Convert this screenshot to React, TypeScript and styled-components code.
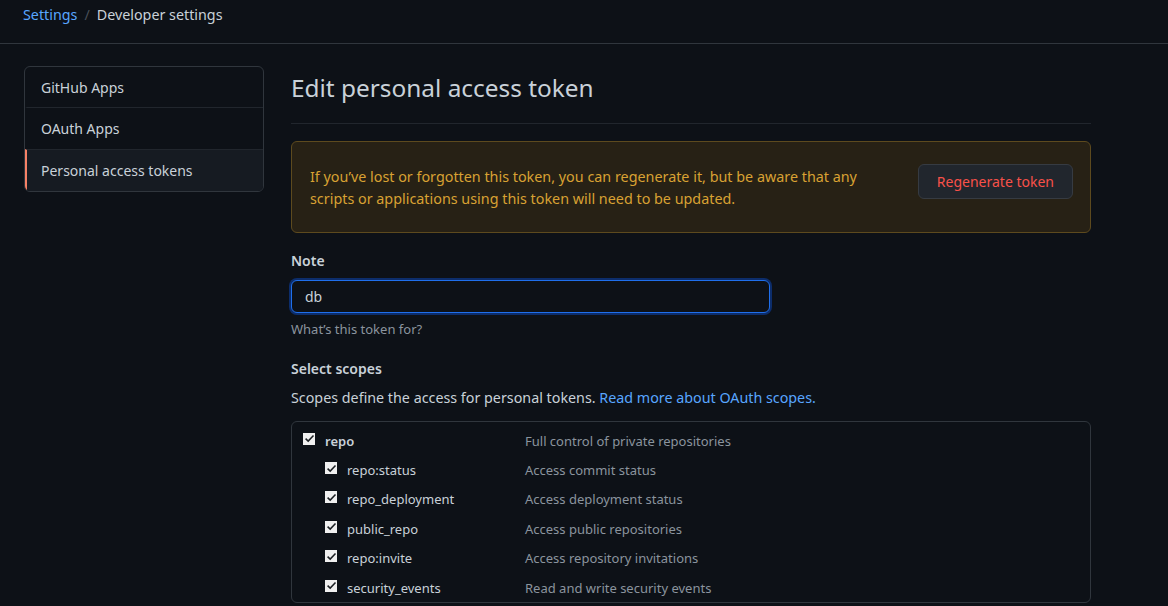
import React from 'react';
import styled, { createGlobalStyle } from 'styled-components';

interface IScope {
  name: string;
  description: string;
  child?: boolean;
}

const scopes: IScope[] = [
  { name: 'repo', description: 'Full control of private repositories' },
  { name: 'repo:status', description: 'Access commit status', child: true },
  { name: 'repo_deployment', description: 'Access deployment status', child: true },
  { name: 'public_repo', description: 'Access public repositories', child: true },
  { name: 'repo:invite', description: 'Access repository invitations', child: true },
  { name: 'security_events', description: 'Read and write security events', child: true },
];

const menuItems = ['GitHub Apps', 'OAuth Apps', 'Personal access tokens'];

const App: React.FC = () => {
  return (
    <>
      <GlobalStyle />
      <Page>
        <Breadcrumb>
          <CrumbLink>Settings</CrumbLink>
          <CrumbSep>/</CrumbSep>
          <CrumbCurrent>Developer settings</CrumbCurrent>
        </Breadcrumb>

        <Layout>
          <Sidebar>
            {menuItems.map((item, i) => (
              <MenuItem key={item} selected={i === menuItems.length - 1}>
                {item}
              </MenuItem>
            ))}
          </Sidebar>

          <Main>
            <Title>Edit personal access token</Title>

            <Flash>
              <FlashText>
                If you’ve lost or forgotten this token, you can regenerate it, but be aware that any
                scripts or applications using this token will need to be updated.
              </FlashText>
              <DangerButton>Regenerate token</DangerButton>
            </Flash>

            <Label>Note</Label>
            <Input defaultValue="db" />
            <Hint>What’s this token for?</Hint>

            <Label>Select scopes</Label>
            <Description>
              Scopes define the access for personal tokens.{' '}
              <Link>Read more about OAuth scopes.</Link>
            </Description>

            <ScopeBox>
              {scopes.map((scope) => (
                <ScopeRow key={scope.name}>
                  <ScopeName child={scope.child}>
                    <CheckBox>
                      <svg width="11" height="11" viewBox="0 0 11 11">
                        <path d="M1.6 5.6 L4.2 8.1 L9.5 2.5" fill="none" stroke="#1b1f23" strokeWidth="1.5" />
                      </svg>
                    </CheckBox>
                    <ScopeLabel child={scope.child}>{scope.name}</ScopeLabel>
                  </ScopeName>
                  <ScopeDesc>{scope.description}</ScopeDesc>
                </ScopeRow>
              ))}
            </ScopeBox>
          </Main>
        </Layout>
      </Page>
    </>
  );
};

const GlobalStyle = createGlobalStyle`
  html, body {
    margin: 0;
    background: #0d1117;
  }
  body {
    font-family: 'Noto Sans', sans-serif;
    color: #c9d1d9;
  }
`;

const Page = styled.div`
  width: 1168px;
  height: 606px;
  overflow: hidden;
  background: #0d1117;
`;

const Breadcrumb = styled.div`
  display: flex;
  align-items: center;
  height: 29px;
  padding: 0 23px 14px;
  border-bottom: 1px solid #30363d;
  font-size: 14.3px;
`;

const CrumbLink = styled.span`
  color: #58a6ff;
`;

const CrumbSep = styled.span`
  color: #484f58;
  margin: 0 7px;
`;

const CrumbCurrent = styled.span`
  color: #c9d1d9;
`;

const Layout = styled.div`
  display: flex;
  gap: 27px;
  padding: 22px 24px 0;
`;

const Sidebar = styled.nav`
  box-sizing: border-box;
  width: 240px;
  flex-shrink: 0;
  align-self: flex-start;
  border: 1px solid #30363d;
  border-radius: 6px;
  overflow: hidden;
`;

const MenuItem = styled.div<{ selected?: boolean }>`
  height: 41px;
  display: flex;
  align-items: center;
  padding-left: 14px;
  font-size: 14px;
  color: #c9d1d9;
  border-top: 1px solid #21262d;
  border-left: 2px solid ${({ selected }) => (selected ? '#f78166' : 'transparent')};
  background: ${({ selected }) => (selected ? '#161b22' : 'transparent')};

  &:first-child {
    border-top: none;
    height: 40px;
  }
`;

const Main = styled.main`
  width: 800px;
`;

const Title = styled.h2`
  margin: 0 0 17px;
  font-size: 24.4px;
  font-weight: 400;
  color: #c9d1d9;
  padding: 5px 0 19px;
  border-bottom: 1px solid #21262d;
`;

const Flash = styled.div`
  display: flex;
  align-items: flex-start;
  justify-content: space-between;
  box-sizing: border-box;
  height: 92px;
  padding: 0 17px 0 18px;
  background: #272115;
  border: 1px solid #5d4a1e;
  border-radius: 6px;
  margin-bottom: 18px;
`;

const FlashText = styled.p`
  margin: 24px 0 0;
  width: 570px;
  font-size: 14.35px;
  line-height: 22px;
  color: #d9a133;
`;

const DangerButton = styled.button`
  height: 35px;
  padding: 0 18px;
  margin-top: 22px;
  font-family: inherit;
  font-size: 14px;
  color: #f85149;
  background: #21262d;
  border: 1px solid #363b42;
  border-radius: 6px;
`;

const Label = styled.div`
  font-size: 14px;
  font-weight: 600;
  color: #c9d1d9;
  line-height: 20px;
  margin-bottom: 9px;
`;

const Input = styled.input`
  display: block;
  box-sizing: border-box;
  width: 479px;
  height: 33px;
  padding: 0 13px;
  font-family: inherit;
  font-size: 14px;
  color: #c9d1d9;
  background: #0d1117;
  border: 1px solid #1f6feb;
  border-radius: 6px;
  box-shadow: 0 0 0 2px #0c2d6b;
  outline: none;
`;

const Hint = styled.div`
  font-size: 13px;
  color: #8b949e;
  margin: 7px 0 21px;
`;

const Description = styled.p`
  margin: 0 0 14px;
  font-size: 14.3px;
  color: #c9d1d9;
`;

const Link = styled.a`
  color: #58a6ff;
`;

const ScopeBox = styled.div`
  border: 1px solid #30363d;
  border-radius: 6px;
  padding: 4px 0 0 11px;
`;

const ScopeRow = styled.div`
  display: flex;
  align-items: center;
  height: 29.4px;
`;

const ScopeName = styled.label<{ child?: boolean }>`
  box-sizing: border-box;
  display: flex;
  align-items: center;
  width: 222px;
  padding-left: ${({ child }) => (child ? '22px' : '0')};
`;

const CheckBox = styled.span`
  width: 12px;
  height: 12px;
  background: #f0f0f0;
  display: flex;
  align-items: center;
  justify-content: center;
  margin-right: 10px;
  margin-top: -4px;
`;

const ScopeLabel = styled.span<{ child?: boolean }>`
  font-size: 13px;
  font-weight: ${({ child }) => (child ? 400 : 600)};
  color: #c9d1d9;
`;

const ScopeDesc = styled.span`
  font-size: 13px;
  color: #8b949e;
`;

export default App;
